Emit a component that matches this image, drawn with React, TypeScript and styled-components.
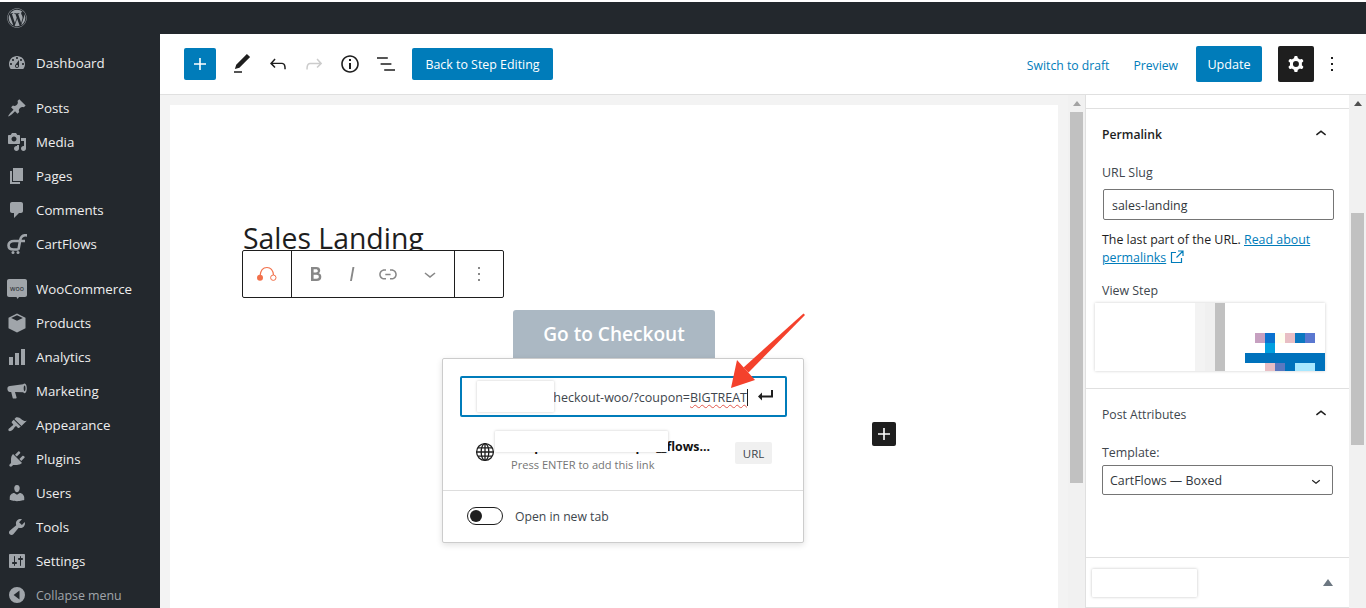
import React from 'react';
import styled, { createGlobalStyle } from 'styled-components';
import { FaWordpress } from 'react-icons/fa';

const GlobalStyle = createGlobalStyle`
  html, body {
    margin: 0;
    height: 100%;
    background: #fff;
    font-family: "Open Sans", "Noto Sans", "Liberation Sans", sans-serif;
    font-size: 13px;
    color: #1e1e1e;
  }
  * { box-sizing: border-box; }
`;

/* dashicons, 20 x 20 */
const menuPaths: Record<string, string> = {
  dashboard:
    'M3.76 16h12.48c1.1-1.37 1.76-3.11 1.76-5 0-4.42-3.58-8-8-8s-8 3.58-8 8c0 1.89.66 3.63 1.76 5zM10 4c.55 0 1 .45 1 1s-.45 1-1 1-1-.45-1-1 .45-1 1-1zM6 6c.55 0 1 .45 1 1s-.45 1-1 1-1-.45-1-1 .45-1 1-1zm8 0c.55 0 1 .45 1 1s-.45 1-1 1-1-.45-1-1 .45-1 1-1zm-5.37 5.55L12 7v6c0 1.1-.9 2-2 2s-2-.9-2-2c0-.57.24-1.08.63-1.45zM4 10c.55 0 1 .45 1 1s-.45 1-1 1-1-.45-1-1 .45-1 1-1zm12 0c.55 0 1 .45 1 1s-.45 1-1 1-1-.45-1-1 .45-1 1-1zm-5 3c0-.55-.45-1-1-1s-1 .45-1 1 .45 1 1 1 1-.45 1-1z',
  posts:
    'M10.44 3.02l1.82-1.82 6.36 6.35-1.83 1.82c-1.05-.68-2.48-.57-3.41.36l-.75.75c-.92.93-1.04 2.35-.35 3.41l-1.83 1.82-2.41-2.41-2.8 2.79c-.42.42-3.38 2.71-3.8 2.29s1.86-3.39 2.28-3.81l2.79-2.79L4.1 9.36l1.83-1.82c1.05.69 2.48.57 3.4-.36l.75-.75c.93-.92 1.05-2.35.36-3.41z',
  media:
    'M13 11V4c0-.55-.45-1-1-1h-1.67L9 1H5L3.67 3H2c-.55 0-1 .45-1 1v7c0 .55.45 1 1 1h10c.55 0 1-.45 1-1zM7 4.5c1.38 0 2.5 1.12 2.5 2.5S8.38 9.5 7 9.5 4.5 8.38 4.5 7 5.62 4.5 7 4.5zM14 6h5v10.5c0 1.38-1.12 2.5-2.5 2.5S14 17.88 14 16.5s1.12-2.5 2.5-2.5c.17 0 .34.02.5.05V9h-3V6zm-4 8.05V13h2v3.5c0 1.38-1.12 2.5-2.5 2.5S7 17.88 7 16.5 8.12 14 9.5 14c.17 0 .34.02.5.05z',
  pages: 'M6 15V2h10v13H6zm-1 1h8v2H3V5h2v11z',
  comments:
    'M5 2h9c1.1 0 2 .9 2 2v7c0 1.1-.9 2-2 2h-2l-5 5v-5H5c-1.1 0-2-.9-2-2V4c0-1.1.9-2 2-2z',
  products:
    'M10 .5l8.5 4.2v10.6L10 19.5l-8.5-4.2V4.7L10 .5zM4.2 4.9L10 7.7l5.8-2.8L10 2.2 4.2 4.9z',
  analytics: 'M2 10h4v8H2zM8 6h4v12H8zM14 2h4v16h-4z',
  marketing:
    'M17.6 2.4c1.4 0 2.2 2.2 2.2 4.9s-.8 4.9-2.2 4.9c-.5 0-1-.3-1.4-.9L8 11l1.6 5.6c.1.5-.2.9-.7.9H6.5c-.4 0-.7-.2-.8-.6L4.2 11H3C1.3 11 .4 9.6.4 7.8S1.3 5 3 5l13.1-1.7c.4-.6.9-.9 1.5-.9zm0 2c-.5 0-.9 1.3-.9 2.9s.4 2.9.9 2.9.9-1.3.9-2.9-.4-2.9-.9-2.9z',
  appearance:
    'M14.48 11.06L7.41 3.99l1.5-1.5c.5-.56 2.3-.47 3.51.32 1.21.8 1.43 1.28 2.91 2.1 1.18.64 2.45 1.26 4.45.85zm-.71.71L6.7 4.7 4.93 6.47c-.39.39-.39 1.02 0 1.41l1.06 1.06c.39.39.39 1.03 0 1.42-.6.6-1.43 1.11-2.21 1.69-.35.26-.7.53-1.01.84C1.43 13.23.91 15 1.76 15.85c.85.85 2.62.33 3.96-1.01.31-.31.58-.66.84-1.01.58-.78 1.09-1.61 1.69-2.21.39-.39 1.03-.39 1.42 0l1.06 1.06c.39.39 1.02.39 1.41 0z',
  plugins:
    'M13.11 4.36L9.87 7.6 8 5.73l3.24-3.24c.35-.34 1.05-.2 1.56.32.52.51.66 1.21.31 1.55zm-8 1.77l.91-1.12 9.01 9.01-1.19.84c-.71.71-2.63 1.16-3.82 1.16H6.14L4.9 17.26c-.59.59-1.54.59-2.12 0-.59-.58-.59-1.53 0-2.12l1.24-1.24v-3.88c0-1.13.4-3.19 1.09-3.89zm7.26 3.97l3.24-3.24c.34-.35 1.04-.21 1.55.31.52.51.66 1.21.31 1.55l-3.24 3.25z',
  users:
    'M10 9.25c-2.27 0-2.73-3.44-2.73-3.44C7 4.02 7.82 2 9.97 2c2.16 0 2.98 2.02 2.71 3.81 0 0-.41 3.44-2.68 3.44zm0 2.57L12.72 10c2.39 0 4.52 2.33 4.52 4.53v2.49s-3.65 1.13-7.24 1.13c-3.65 0-7.24-1.13-7.24-1.13v-2.49c0-2.25 1.94-4.48 4.47-4.48z',
  tools:
    'M16.68 9.77c-1.34 1.34-3.3 1.67-4.95.99l-5.41 6.52c-.99.99-2.59.99-3.58 0s-.99-2.59 0-3.57l6.52-5.42c-.68-1.65-.35-3.61.99-4.95 1.28-1.28 3.12-1.62 4.72-1.06l-2.89 2.89 2.82 2.82 2.86-2.87c.53 1.58.18 3.39-1.08 4.65z',
  settings:
    'M18 16V4c0-.55-.45-1-1-1H3c-.55 0-1 .45-1 1v12c0 .55.45 1 1 1h14c.55 0 1-.45 1-1zM8 11h1c.55 0 1 .45 1 1s-.45 1-1 1H8v1.5c0 .28-.22.5-.5.5s-.5-.22-.5-.5V13H6c-.55 0-1-.45-1-1s.45-1 1-1h1V5.5c0-.28.22-.5.5-.5s.5.22.5.5V11zm5-2h-1c-.55 0-1-.45-1-1s.45-1 1-1h1V5.5c0-.28.22-.5.5-.5s.5.22.5.5V7h1c.55 0 1 .45 1 1s-.45 1-1 1h-1v5.5c0 .28-.22.5-.5.5s-.5-.22-.5-.5V9z',
  collapse:
    'M10 2a8 8 0 1 1 0 16 8 8 0 0 1 0-16zm2.5 3.6L6.6 10l5.9 4.4V5.6z',
};

/* block editor icons, 24 x 24 */
const editorPaths: Record<string, string> = {
  plus: 'M18 11.2h-5.2V6h-1.6v5.2H6v1.6h5.2V18h1.6v-5.2H18z',
  pencil: 'M20.1 5.1L16.9 2 6.2 12.7l-1.3 4.4 4.5-1.3L20.1 5.1zM4 20.8h8v-1.5H4v1.5z',
  undo: 'M18.3 11.7c-.6-.6-1.4-.9-2.3-.9H6.7l2.9-3.3-1.1-1-4.5 5L8.5 16l1-1-2.7-3H16c.5 0 .9.2 1.3.5 1 1 1 3.4 1 4.5v.3h1.5v-.2c0-1.5 0-4.3-1.5-5.7z',
  redo: 'M15.6 6.5l-1.1 1 2.9 3.3H8c-.9 0-1.7.3-2.3.9-1.4 1.5-1.4 4.2-1.4 5.6v.2h1.5v-.3c0-1.1 0-3.5 1-4.5.3-.3.7-.5 1.3-.5h9.2L14.5 15l1.1 1.1 4.6-4.6-4.6-5z',
  info: 'M12 3.2c-4.8 0-8.8 3.9-8.8 8.8 0 4.8 3.9 8.8 8.8 8.8 4.8 0 8.8-3.9 8.8-8.8 0-4.8-4-8.8-8.8-8.8zm0 16c-4 0-7.2-3.3-7.2-7.2C4.8 8 8 4.8 12 4.8s7.2 3.3 7.2 7.2c0 4-3.2 7.2-7.2 7.2zM11 17h2v-6h-2v6zm0-8h2V7h-2v2z',
  list: 'M13.8 5.2H3v1.5h10.8V5.2zm-3.6 12v1.5H21v-1.5H10.2zm7.2-6H6.6v1.5h10.8v-1.5z',
  more: 'M13 19h-2v-2h2v2zm0-6h-2v-2h2v2zm0-6h-2V5h2v2z',
  cog: 'M10.289 4.836A1 1 0 0111.275 4h1.306a1 1 0 01.987.836l.244 1.466c.787.26 1.503.679 2.108 1.218l1.393-.522a1 1 0 011.216.437l.653 1.13a1 1 0 01-.23 1.273l-1.148.944a6.025 6.025 0 010 2.435l1.149.946a1 1 0 01.23 1.272l-.653 1.13a1 1 0 01-1.216.437l-1.394-.522c-.605.54-1.32.958-2.108 1.218l-.244 1.466a1 1 0 01-.987.836h-1.306a1 1 0 01-.986-.836l-.244-1.466a5.995 5.995 0 01-2.108-1.218l-1.394.522a1 1 0 01-1.217-.436l-.653-1.131a1 1 0 01.23-1.272l1.149-.946a6.026 6.026 0 010-2.435l-1.148-.944a1 1 0 01-.23-1.272l.653-1.131a1 1 0 011.217-.437l1.393.522a5.994 5.994 0 012.108-1.218l.244-1.466zM14.929 12a3 3 0 11-6 0 3 3 0 016 0z',
  bold: 'M14.7 11.3c1-.6 1.5-1.6 1.5-3 0-2.3-1.3-3.4-4-3.4H7v14h5.8c1.4 0 2.5-.3 3.3-1 .8-.7 1.2-1.7 1.2-2.9.1-1.9-.8-3.1-2.6-3.7zm-5.1-4h2.3c.6 0 1.1.1 1.4.4.3.3.5.7.5 1.2s-.2 1-.5 1.2c-.3.3-.8.4-1.4.4H9.6V7.3zm4.6 9c-.4.3-1 .4-1.7.4H9.6v-3.9h2.9c.7 0 1.3.2 1.7.5.4.3.6.8.6 1.5s-.2 1.2-.6 1.5z',
  italic: 'M12.5 5L10 19h1.9l2.5-14z',
  link: 'M15.6 7.2H14v1.5h1.6c2 0 3.7 1.7 3.7 3.7s-1.7 3.7-3.7 3.7H14v1.5h1.6c2.8 0 5.2-2.3 5.2-5.2 0-2.9-2.3-5.2-5.2-5.2zM4.7 12.4c0-2 1.7-3.7 3.7-3.7H10V7.2H8.4c-2.9 0-5.2 2.3-5.2 5.2 0 2.9 2.3 5.2 5.2 5.2H10v-1.5H8.4c-2 0-3.7-1.7-3.7-3.7zm4.6.9h5.3v-1.5H9.3v1.5z',
  down: 'M17.5 11.6L12 16l-5.5-4.4.9-1.2L12 14l4.5-3.6 1 1.2z',
  up: 'M6.5 12.4L12 8l5.5 4.4-.9 1.2L12 10l-4.5 3.6-1-1.2z',
};

const Shell = styled.div`
  height: 100vh;
  padding-top: 2px;
  display: flex;
  flex-direction: column;
  overflow: hidden;
`;

const AdminBar = styled.div`
  height: 32px;
  flex: none;
  background: #23282d;
  color: #a0a5aa;
  display: flex;
  align-items: center;
  padding-left: 7px;
  font-size: 20px;
`;

const Body = styled.div`
  flex: 1;
  min-height: 0;
  display: flex;
`;

const Menu = styled.nav`
  width: 160px;
  flex: none;
  background: #23282d;
  padding-top: 12px;
`;

const MenuRow = styled.div<{ $gap?: boolean; $dim?: boolean }>`
  height: 34px;
  display: flex;
  align-items: center;
  gap: 9px;
  padding-left: 7px;
  margin-bottom: ${({ $gap }) => ($gap ? '11px' : '0')};
  color: ${({ $dim }) => ($dim ? '#a0a5aa' : '#eeeeee')};
  font-size: ${({ $dim }) => ($dim ? '12.4px' : '13.3px')};
  white-space: nowrap;
`;

const MenuIcon = styled.svg`
  width: 20px;
  height: 20px;
  flex: none;
  fill: #a0a5aa;
`;

const Editor = styled.div`
  flex: 1;
  min-width: 0;
  display: flex;
  flex-direction: column;
`;

const Header = styled.header`
  height: 61px;
  flex: none;
  background: #fff;
  border-bottom: 1px solid #e0e0e0;
  display: flex;
  align-items: center;
  padding: 0 16px 0 24px;
`;

const AddButton = styled.button`
  width: 32px;
  height: 32px;
  border: 0;
  padding: 0;
  border-radius: 2px;
  background: #007cba;
  display: flex;
  align-items: center;
  justify-content: center;
  margin-right: 8px;
`;

const ToolIcon = styled.svg<{ $fill?: string; $size?: number; $mt?: number }>`
  width: ${({ $size }) => $size ?? 24}px;
  height: ${({ $size }) => $size ?? 24}px;
  margin-top: ${({ $mt }) => $mt ?? 0}px;
  flex: none;
  fill: ${({ $fill }) => $fill ?? '#1e1e1e'};
`;

const ToolSlot = styled.div<{ $ml?: number }>`
  width: 36px;
  height: 36px;
  margin-left: ${({ $ml }) => $ml ?? 0}px;
  display: flex;
  align-items: center;
  justify-content: center;
`;

const StepButton = styled.button`
  height: 32px;
  width: 141px;
  margin-left: 8px;
  padding: 0;
  border: 0;
  border-radius: 2px;
  background: #007cba;
  color: #fff;
  font: inherit;
  font-size: 12.4px;
`;

const HeaderRight = styled.div`
  margin-left: auto;
  display: flex;
  align-items: center;
`;

const TextAction = styled.span<{ $mr: number }>`
  color: #007cba;
  font-size: 12.2px;
  padding-top: 2px;
  margin-right: ${({ $mr }) => $mr}px;
`;

const UpdateButton = styled.button`
  width: 66px;
  height: 36px;
  padding: 1px 0 0;
  border: 0;
  border-radius: 2px;
  background: #007cba;
  color: #fff;
  font: inherit;
  font-size: 12.6px;
  margin-right: 16px;
`;

const CogButton = styled.div`
  width: 36px;
  height: 36px;
  border-radius: 2px;
  background: #1e1e1e;
  display: flex;
  align-items: center;
  justify-content: center;
`;

const MoreSlot = styled.div`
  width: 36px;
  display: flex;
  justify-content: center;
`;

const Workspace = styled.div`
  flex: 1;
  min-height: 0;
  display: flex;
`;

const ContentArea = styled.div`
  flex: 1;
  min-width: 0;
  background: #f3f3f3;
  padding: 10px 10px 0;
`;

const Canvas = styled.main`
  position: relative;
  height: 100%;
  background: #fff;
  padding: 113px 0 0 73px;
`;

const PostTitle = styled.h1`
  margin: 0;
  height: 32px;
  font-size: 28.4px;
  line-height: 40px;
  font-weight: 400;
  white-space: nowrap;
  color: #1e1e1e;
`;

const CheckoutRow = styled.div`
  margin: 60px 0 0 270px;
`;

const CheckoutButton = styled.div`
  width: 202px;
  height: 60px;
  border-radius: 3px;
  background: #abb8c3;
  color: #fff;
  font-size: 19.1px;
  font-weight: 600;
  text-align: center;
  padding-top: 11px;
`;

const BlockToolbar = styled.div`
  position: absolute;
  left: 72px;
  top: 145px;
  width: 262px;
  height: 48px;
  background: #fff;
  border: 1px solid #1e1e1e;
  border-radius: 2px;
  display: flex;
`;

const ToolbarGroup = styled.div<{ $w: number; $pad?: string }>`
  width: ${({ $w }) => $w}px;
  display: flex;
  align-items: center;
  justify-content: ${({ $pad }) => ($pad ? 'flex-start' : 'center')};
  padding: ${({ $pad }) => $pad ?? '0'};
  & + & {
    border-left: 1px solid #1e1e1e;
  }
`;

const LinkPopover = styled.div`
  position: absolute;
  left: 272px;
  top: 253px;
  width: 362px;
  height: 185px;
  background: #fff;
  border: 1px solid #ccc;
  border-radius: 2px;
  box-shadow: 0 2px 6px rgba(0, 0, 0, 0.12);
  padding: 17px;
`;

const UrlField = styled.div`
  width: 327px;
  height: 41px;
  border: 2px solid #007cba;
  border-radius: 2px;
  display: flex;
  align-items: center;
  justify-content: flex-end;
  padding: 1px 9px 0 0;
`;

const UrlText = styled.span`
  font-size: 12.5px;
  white-space: nowrap;
  color: #40464d;
  border-right: 1px solid #1e1e1e;
  margin-right: 8px;
  line-height: 17px;
`;

const Misspelled = styled.span`
  text-decoration: underline wavy #e2574c 1px;
  text-underline-offset: 2px;
`;

const Suggestion = styled.div`
  height: 74px;
  margin: 0 -17px;
  padding: 14px 31px 0 32px;
  display: flex;
  align-items: flex-start;
  border-bottom: 1px solid #ddd;
`;

const SuggestionText = styled.div`
  flex: 1;
  min-width: 0;
  padding: 7px 0 0 16px;
`;

const SuggestionTitle = styled.div`
  font-weight: 700;
  font-size: 12.4px;
  line-height: 17px;
  color: #111;
  text-align: right;
  padding-right: 25px;
  white-space: nowrap;
`;

const SuggestionHint = styled.div`
  font-size: 11.1px;
  color: #757575;
  line-height: 20px;
`;

const UrlBadge = styled.span`
  flex: none;
  width: 37px;
  height: 22px;
  margin-top: 11px;
  background: #f0f0f0;
  border-radius: 2px;
  font-size: 11.5px;
  color: #40464d;
  display: flex;
  align-items: center;
  justify-content: center;
`;

const ToggleRow = styled.div`
  display: flex;
  align-items: center;
  gap: 12px;
  padding: 16px 0 0 7px;
  font-size: 12.2px;
  color: #40464d;
`;

const Toggle = styled.span`
  width: 36px;
  height: 18px;
  border: 1px solid #1e1e1e;
  border-radius: 9px;
  padding: 2px;
  display: block;
`;

const ToggleKnob = styled.span`
  display: block;
  width: 12px;
  height: 12px;
  border-radius: 50%;
  background: #1e1e1e;
`;

const Mask = styled.div<{ $l: number; $t: number; $w: number; $h: number }>`
  position: absolute;
  left: ${({ $l }) => $l}px;
  top: ${({ $t }) => $t}px;
  width: ${({ $w }) => $w}px;
  height: ${({ $h }) => $h}px;
  background: #fff;
  box-shadow: 0 0 3px rgba(0, 0, 0, 0.22);
  border-radius: 1px;
`;

const InserterDot = styled.div`
  position: absolute;
  left: 702px;
  top: 317px;
  width: 24px;
  height: 24px;
  border-radius: 2px;
  background: #1e1e1e;
  display: flex;
  align-items: center;
  justify-content: center;
`;

const ArrowMark = styled.svg`
  position: absolute;
  left: 550px;
  top: 200px;
  width: 100px;
  height: 90px;
`;

const ScrollTrack = styled.div<{ $w: number; $thumbTop: number; $thumbH: number }>`
  width: ${({ $w }) => $w}px;
  flex: none;
  background: #f1f1f1;
  padding: 3px 2px 0;
  display: flex;
  flex-direction: column;
  align-items: center;
  &::after {
    content: '';
    display: block;
    width: 13px;
    height: ${({ $thumbH }) => $thumbH}px;
    margin-top: ${({ $thumbTop }) => $thumbTop}px;
    background: #c1c1c1;
  }
`;

const ScrollArrow = styled.span<{ $c?: string }>`
  width: 0;
  height: 0;
  margin-top: 3px;
  border-left: 4px solid transparent;
  border-right: 4px solid transparent;
  border-bottom: 5px solid ${({ $c }) => $c ?? '#a3a3a3'};
`;

const Panel = styled.aside`
  width: 264px;
  flex: none;
  background: #fff;
  border-left: 1px solid #e0e0e0;
  display: flex;
  flex-direction: column;
`;

const PanelStub = styled.div`
  height: 14px;
  flex: none;
  border-bottom: 1px solid #e0e0e0;
`;

const PanelSection = styled.section<{ $h: number }>`
  height: ${({ $h }) => $h}px;
  flex: none;
  padding: 14px 16px 0;
  border-bottom: 1px solid #e0e0e0;
`;

const PanelHead = styled.div<{ $strong?: boolean }>`
  height: 22px;
  display: flex;
  align-items: center;
  justify-content: space-between;
  font-size: 12.2px;
  font-weight: ${({ $strong }) => ($strong ? 600 : 500)};
  color: ${({ $strong }) => ($strong ? '#1e1e1e' : '#40464d')};
  padding-right: 1px;
`;

const FieldLabel = styled.div<{ $mt: number }>`
  margin-top: ${({ $mt }) => $mt}px;
  font-size: 12.4px;
  line-height: 18px;
  color: #40464d;
`;

const TextBox = styled.div<{ $h: number; $w: number; $pad: number; $ml: number; $mt: number }>`
  width: ${({ $w }) => $w}px;
  height: ${({ $h }) => $h}px;
  margin: ${({ $mt }) => $mt}px 0 0 ${({ $ml }) => $ml}px;
  padding: 1px ${({ $pad }) => $pad}px 0;
  border: 1px solid #757575;
  border-radius: 2px;
  font-size: 12.4px;
  color: #32373c;
  display: flex;
  align-items: center;
  justify-content: space-between;
`;

const HelpText = styled.p`
  margin: 11px 0 0;
  font-size: 12.4px;
  line-height: 18px;
  color: #1e1e1e;
`;

const HelpLink = styled.a`
  color: #007cba;
  text-decoration: underline;
`;

const ExternalIcon = styled.svg`
  vertical-align: -2px;
  margin-left: 1px;
`;

const Thumb = styled.svg`
  display: block;
  width: 230px;
  height: 68px;
  margin: 3px 0 0 -7px;
  box-shadow: 0 0 3px rgba(0, 0, 0, 0.2);
`;

const PanelFooter = styled.div`
  flex: 1;
  display: flex;
  align-items: center;
  justify-content: space-between;
  padding: 0 16px 0 6px;
  border-bottom: 1px solid #e0e0e0;
`;

const FooterMask = styled.div`
  width: 105px;
  height: 28px;
  background: #fff;
  box-shadow: 0 0 3px rgba(0, 0, 0, 0.25);
  border-radius: 1px;
`;

const FooterArrow = styled.span`
  width: 0;
  height: 0;
  border-left: 5px solid transparent;
  border-right: 5px solid transparent;
  border-bottom: 7px solid #6c7781;
`;

const menuGroups: { key: string; label: string; gap?: boolean }[] = [
  { key: 'dashboard', label: 'Dashboard', gap: true },
  { key: 'posts', label: 'Posts' },
  { key: 'media', label: 'Media' },
  { key: 'pages', label: 'Pages' },
  { key: 'comments', label: 'Comments' },
  { key: 'cartflows', label: 'CartFlows', gap: true },
  { key: 'woo', label: 'WooCommerce' },
  { key: 'products', label: 'Products' },
  { key: 'analytics', label: 'Analytics' },
  { key: 'marketing', label: 'Marketing' },
  { key: 'appearance', label: 'Appearance' },
  { key: 'plugins', label: 'Plugins' },
  { key: 'users', label: 'Users' },
  { key: 'tools', label: 'Tools' },
  { key: 'settings', label: 'Settings' },
];

const thumbPixels: [number, number, number, number, string][] = [
  [100, 0, 10, 68, '#f3f3f3'],
  [110, 0, 10, 68, '#f0f0f0'],
  [120, 0, 10, 68, '#c1c1c1'],
  [160, 30, 10, 10, '#c6a0c0'],
  [170, 30, 10, 10, '#0a72cf'],
  [180, 30, 10, 10, '#fffff0'],
  [190, 30, 10, 10, '#e8bec4'],
  [200, 30, 10, 10, '#0a78c0'],
  [210, 30, 10, 10, '#5a78d0'],
  [170, 40, 10, 10, '#00a0e0'],
  [150, 50, 80, 10, '#0072bc'],
  [170, 60, 10, 8, '#e8bec4'],
  [180, 60, 10, 8, '#5a78c0'],
  [190, 60, 10, 8, '#0072bc'],
  [200, 60, 20, 8, '#a8e8ff'],
  [220, 60, 10, 8, '#0072bc'],
];

const Edit = ({ name, fill, size }: { name: string; fill?: string; size?: number }) => (
  <ToolIcon viewBox="0 0 24 24" $fill={fill} $size={size}>
    <path d={editorPaths[name]} fillRule="evenodd" />
  </ToolIcon>
);

const MenuGlyph = ({ name }: { name: string }) => {
  if (name === 'woo') {
    return (
      <MenuIcon viewBox="0 0 20 20">
        <path d="M2 0h16c1.1 0 2 .9 2 2v14c0 1.1-.9 2-2 2h-6l-1.5 2-1-2H2c-1.1 0-2-.9-2-2V2C0 .9.9 0 2 0z" />
        <text x="10" y="11.5" fontSize="7" textAnchor="middle" fill="#23282d" fontFamily="Open Sans">
          woo
        </text>
      </MenuIcon>
    );
  }
  if (name === 'cartflows') {
    return (
      <MenuIcon viewBox="0 0 20 20">
        <path
          d="M20.5 1.5C15.500.5 13.800 3 13.200 6l-1.700 9.500M11.500 7h6.500M11.500 7H7C3.500 7 1.500 8.800 1.500 11.200s1.800 4.300 5 4.300h5"
          fill="none"
          stroke="#a0a5aa"
          strokeWidth="2.600"
        />
        <circle cx="6" cy="18.500" r="1.500" />
        <circle cx="11" cy="18.500" r="1.500" />
      </MenuIcon>
    );
  }
  return (
    <MenuIcon viewBox="0 0 20 20">
      <path d={menuPaths[name]} fillRule="evenodd" />
    </MenuIcon>
  );
};

const AppMenu = () => (
  <Menu>
    {menuGroups.map((item) => (
      <MenuRow key={item.key} $gap={item.gap}>
        <MenuGlyph name={item.key} />
        {item.label}
      </MenuRow>
    ))}
    <MenuRow $dim>
      <MenuGlyph name="collapse" />
      Collapse menu
    </MenuRow>
  </Menu>
);

const EditorHeader = () => (
  <Header>
    <AddButton>
      <Edit name="plus" fill="#fff" />
    </AddButton>
    <ToolSlot><Edit name="pencil" /></ToolSlot>
    <ToolSlot><Edit name="undo" /></ToolSlot>
    <ToolSlot><Edit name="redo" fill="#cccccc" /></ToolSlot>
    <ToolSlot><Edit name="info" /></ToolSlot>
    <ToolSlot><Edit name="list" /></ToolSlot>
    <StepButton>Back to Step Editing</StepButton>
    <HeaderRight>
      <TextAction $mr={24}>Switch to draft</TextAction>
      <TextAction $mr={18}>Preview</TextAction>
      <UpdateButton>Update</UpdateButton>
      <CogButton>
        <Edit name="cog" fill="#fff" />
      </CogButton>
      <MoreSlot><Edit name="more" /></MoreSlot>
    </HeaderRight>
  </Header>
);

const BlockCanvas = () => (
  <Canvas>
    <PostTitle>Sales Landing</PostTitle>
    <CheckoutRow>
      <CheckoutButton>Go to Checkout</CheckoutButton>
    </CheckoutRow>

    <BlockToolbar>
      <ToolbarGroup $w={48}>
        <ToolIcon viewBox="0 0 24 24" $fill="none">
          <path d="M5 14C5.500 8 8.500 5.500 12 5.500S18 8.500 18.500 13" stroke="#f2704a" strokeWidth="1.200" />
          <circle cx="5" cy="15.700" r="3" fill="#f2704a" />
          <circle cx="18.300" cy="15.700" r="2.700" stroke="#f2704a" strokeWidth="1" fill="#fff" />
        </ToolIcon>
      </ToolbarGroup>
      <ToolbarGroup $w={163} $pad="0 0 0 6px">
        <ToolSlot><Edit name="bold" fill="#888" /></ToolSlot>
        <ToolSlot><Edit name="italic" fill="#888" /></ToolSlot>
        <ToolSlot><Edit name="link" fill="#888" /></ToolSlot>
        <ToolSlot $ml={6}><Edit name="down" fill="#888" /></ToolSlot>
      </ToolbarGroup>
      <ToolbarGroup $w={49}>
        <Edit name="more" fill="#888" />
      </ToolbarGroup>
    </BlockToolbar>

    <LinkPopover>
      <UrlField>
        <UrlText>
          heckout-woo/?coupon=<Misspelled>BIGTREAT</Misspelled>
        </UrlText>
        <ToolIcon viewBox="0 0 20 20" $size={20}>
          <path d="M17 3h-2v5.500H6V5.500L2 9.500l4 4v-3h11z" />
        </ToolIcon>
      </UrlField>
      <Suggestion>
        <ToolIcon viewBox="0 0 20 20" $fill="none" $size={20} $mt={11}>
          <g stroke="#1e1e1e" strokeWidth="1.300">
            <circle cx="10" cy="10" r="8.400" />
            <ellipse cx="10" cy="10" rx="3.800" ry="8.400" />
            <path d="M10 1.600v16.800M1.600 10h16.800M3 5.800h14M3 14.200h14" />
          </g>
        </ToolIcon>
        <SuggestionText>
          <SuggestionTitle>shop-wordsite.com/pre__flows...</SuggestionTitle>
          <SuggestionHint>Press ENTER to add this link</SuggestionHint>
        </SuggestionText>
        <UrlBadge>URL</UrlBadge>
      </Suggestion>
      <ToggleRow>
        <Toggle>
          <ToggleKnob />
        </Toggle>
        Open in new tab
      </ToggleRow>
    </LinkPopover>

    <Mask $l={307} $t={276} $w={77} $h={31} />
    <Mask $l={325} $t={326} $w={173} $h={21} />

    <InserterDot>
      <Edit name="plus" fill="#fff" />
    </InserterDot>

    <ArrowMark viewBox="0 0 100 90">
      <path d="M83.500 8.500l1.500 1.500L28.500 67.600l-5-5.200z" fill="#f4412c" />
      <path d="M11 83l6-28 18 20z" fill="#f4412c" />
    </ArrowMark>
  </Canvas>
);

const SettingsPanel = () => (
  <Panel>
    <PanelStub />
    <PanelSection $h={280}>
      <PanelHead $strong>
        Permalink
        <Edit name="up" size={22} />
      </PanelHead>
      <FieldLabel $mt={19}>URL Slug</FieldLabel>
      <TextBox $w={231} $h={31} $pad={8} $ml={1} $mt={7}>sales-landing</TextBox>
      <HelpText>
        The last part of the URL. <HelpLink>Read about</HelpLink>
        <br />
        <HelpLink>permalinks</HelpLink>{' '}
        <ExternalIcon width="14" height="14" viewBox="0 0 14 14" fill="none" stroke="#007cba" strokeWidth="1.200">
          <path d="M6 2.500H1.500v10h10V8M8 1h5v5M13 1L6.500 7.500" />
        </ExternalIcon>
      </HelpText>
      <FieldLabel $mt={15}>View Step</FieldLabel>
      <Thumb viewBox="0 0 230 68">
        <rect width="230" height="68" fill="#fff" />
        {thumbPixels.map(([x, y, w, h, c]) => (
          <rect key={`${x}-${y}`} x={x} y={y} width={w} height={h} fill={c} />
        ))}
      </Thumb>
    </PanelSection>
    <PanelSection $h={169}>
      <PanelHead>
        Post Attributes
        <Edit name="up" size={22} />
      </PanelHead>
      <FieldLabel $mt={19}>Template:</FieldLabel>
      <TextBox $w={231} $h={30} $pad={7} $ml={0} $mt={3}>
        CartFlows — Boxed
        <Edit name="down" size={18} />
      </TextBox>
    </PanelSection>
    <PanelFooter>
      <FooterMask />
      <FooterArrow />
    </PanelFooter>
  </Panel>
);

const App = () => (
  <Shell>
    <GlobalStyle />
    <AdminBar>
      <FaWordpress />
    </AdminBar>
    <Body>
      <AppMenu />
      <Editor>
        <EditorHeader />
        <Workspace>
          <ContentArea>
            <BlockCanvas />
          </ContentArea>
          <ScrollTrack $w={17} $thumbTop={6} $thumbH={371}>
            <ScrollArrow />
          </ScrollTrack>
          <SettingsPanel />
          <ScrollTrack $w={17} $thumbTop={107} $thumbH={232}>
            <ScrollArrow $c="#505050" />
          </ScrollTrack>
        </Workspace>
      </Editor>
    </Body>
  </Shell>
);

export default App;
